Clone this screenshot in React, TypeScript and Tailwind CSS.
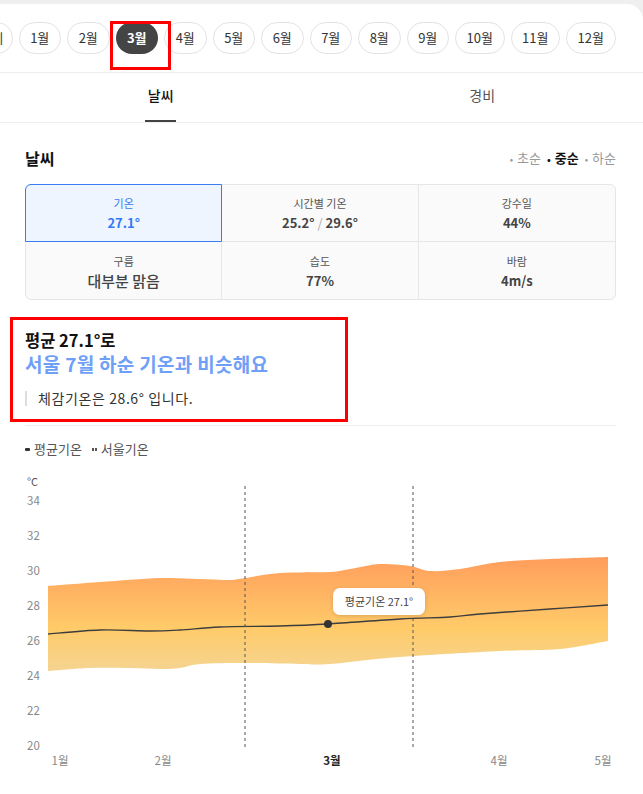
import type { ReactNode } from 'react'

type Pt = [number, number]

// catmull-rom through the points, returned as cubic segments (no leading M)
function curve(pts: Pt[]) {
  let d = ''
  for (let i = 0; i < pts.length - 1; i++) {
    const p0 = pts[i - 1] ?? pts[i]
    const p1 = pts[i]
    const p2 = pts[i + 1]
    const p3 = pts[i + 2] ?? p2
    const c1: Pt = [p1[0] + (p2[0] - p0[0]) / 6, p1[1] + (p2[1] - p0[1]) / 6]
    const c2: Pt = [p2[0] - (p3[0] - p1[0]) / 6, p2[1] - (p3[1] - p1[1]) / 6]
    d += ` C${c1[0]},${c1[1]} ${c2[0]},${c2[1]} ${p2[0]},${p2[1]}`
  }
  return d
}

const months = ['1월', '2월', '3월', '4월', '5월', '6월', '7월', '8월', '9월', '10월', '11월', '12월']

const bandTop: Pt[] = [
  [48, 584], [100, 580], [160, 576], [200, 577], [230, 578], [245, 576], [280, 571],
  [330, 570], [350, 567], [380, 562], [410, 564], [430, 569], [460, 567], [500, 560],
  [550, 557], [608, 555],
]
const bandBottom: Pt[] = [
  [608, 639], [560, 647], [500, 649], [400, 655], [330, 662], [300, 662], [245, 661],
  [200, 662], [180, 666], [160, 667], [130, 666], [90, 666], [48, 669],
]
const mean: Pt[] = [
  [48, 632], [100, 628], [150, 629], [180, 628], [220, 625], [280, 624], [328, 622],
  [400, 617], [450, 615], [480, 612], [550, 607], [608, 603],
]

function Cell({ label, value, big, active, last, bottom }: {
  label: string
  value: ReactNode
  big?: boolean
  active?: boolean
  last?: boolean
  bottom?: boolean
}) {
  return (
    <div
      className={`relative flex h-[57px] flex-col items-center justify-center ${last ? '' : 'border-r border-[#e6e6e6]'} ${bottom ? '' : 'border-b border-[#e6e6e6]'} ${active ? 'bg-[#eef5ff]' : ''}`}
    >
      {active && <div className="absolute -inset-px rounded-tl-[6px] border border-[#3b7cf0]" />}
      <div className={`text-[11px] leading-[19px] ${active ? 'text-[#3478f6]' : 'text-[#555]'}`}>{label}</div>
      <div
        className={`leading-[19px] ${big ? 'text-[15px] font-medium text-[#333]' : 'text-[13px] font-bold'} ${active ? 'text-[#3478f6]' : 'text-[#444]'}`}
      >
        {value}
      </div>
    </div>
  )
}

function Chart() {
  const yTicks = [34, 32, 30, 28, 26, 24, 22, 20]
  const xTicks: [string, number, boolean][] = [
    ['1월', 60, false], ['2월', 163, false], ['3월', 332, true], ['4월', 499, false], ['5월', 603, false],
  ]
  return (
    <svg width="591" height="300" viewBox="25 470 591 300" className="mt-[14px] block">
      <defs>
        <linearGradient id="band" x1="0" y1="555" x2="0" y2="669" gradientUnits="userSpaceOnUse">
          <stop offset="0" stopColor="#ff9d5c" />
          <stop offset="0.62" stopColor="#ffcb69" />
          <stop offset="1" stopColor="#f5d491" />
        </linearGradient>
        <filter id="shadow" x="-20%" y="-40%" width="140%" height="180%">
          <feDropShadow dx="0" dy="1" stdDeviation="2" floodColor="#000" floodOpacity="0.15" />
        </filter>
      </defs>

      <text x="27" y="484" fontSize="11" fill="#555">°C</text>
      {yTicks.map((t, i) => (
        <text key={t} x="27" y={503 + i * 35} fontSize="11.5" fill="#888">{t}</text>
      ))}

      <path
        d={`M${bandTop[0][0]},${bandTop[0][1]}${curve(bandTop)} L${bandBottom[0][0]},${bandBottom[0][1]}${curve(bandBottom)} Z`}
        fill="url(#band)"
      />
      <path d={`M${mean[0][0]},${mean[0][1]}${curve(mean)}`} fill="none" stroke="#3d3d3d" strokeWidth="1.4" />

      <line x1="245" y1="484" x2="245" y2="746" stroke="#555" strokeDasharray="3 3" />
      <line x1="413" y1="484" x2="413" y2="746" stroke="#555" strokeDasharray="3 3" />

      <circle cx="328" cy="622" r="4" fill="#333" />

      <rect x="333" y="586" width="92" height="27" rx="7" fill="#fff" filter="url(#shadow)" />
      <text x="379" y="603.5" fontSize="11" fill="#444" textAnchor="middle">평균기온 27.1°</text>

      {xTicks.map(([l, x, b]) => (
        <text
          key={l}
          x={x}
          y="763"
          fontSize="11.5"
          textAnchor="middle"
          fill={b ? '#222' : '#888'}
          fontWeight={b ? 700 : 400}
        >
          {l}
        </text>
      ))}
    </svg>
  )
}

export default function App() {
  return (
    <div className="relative min-h-screen overflow-hidden bg-[#efefef] pt-[4px] font-['Noto_Sans_CJK_KR','Noto_Sans',sans-serif] text-[#111]">
      <div className="min-h-[790px] rounded-tr-[16px] bg-white">
        {/* month picker */}
        <div className="overflow-hidden border-b border-[#eee]">
          <div className="-ml-[30px] flex gap-[6px] py-[18px]">
            <div className="flex h-[32px] w-[42.5px] shrink-0 items-center justify-center rounded-full border border-[#e3e3e3] text-[13px] text-[#333]">
              전체
            </div>
            {months.map(m => {
              const active = m === '3월'
              return (
                <div
                  key={m}
                  className={`flex h-[32px] shrink-0 items-center justify-center rounded-full text-[13px] ${m.length > 2 ? 'w-[49.5px]' : 'w-[42.5px]'} ${active ? 'bg-[#444] font-bold text-white' : 'border border-[#e3e3e3] text-[#333]'}`}
                >
                  {m}
                </div>
              )
            })}
          </div>
        </div>

        {/* tabs */}
        <div className="flex h-[50px] border-b border-[#eee]">
          <div className="flex flex-1 flex-col items-center">
            <span className="pt-[12px] text-[14px] leading-[20px] font-medium text-[#111]">날씨</span>
            <div className="mt-auto h-[2px] w-[31px] bg-[#444]" />
          </div>
          <div className="flex flex-1 flex-col items-center">
            <span className="pt-[12px] text-[14px] leading-[20px] text-[#555]">경비</span>
          </div>
        </div>

        <div className="pr-[27px] pl-[25px]">
          <div className="mt-[23px] flex h-[24px] items-center justify-between">
            <h2 className="text-[16px] font-bold">날씨</h2>
            <div className="flex items-center gap-[6px] text-[13px]">
              <span className="text-[#999]"><span className="mr-[4px] text-[10px]">•</span>초순</span>
              <span className="font-bold text-[#111]"><span className="mr-[4px] text-[10px]">•</span>중순</span>
              <span className="text-[#999]"><span className="mr-[4px] text-[10px]">•</span>하순</span>
            </div>
          </div>

          <div className="mt-[14px] grid grid-cols-3 rounded-[6px] border border-[#e6e6e6] bg-[#fafafa]">
            <Cell label="기온" value="27.1°" active />
            <Cell label="시간별 기온" value={<>25.2° <span className="font-normal text-[#aaa]">/</span> 29.6°</>} />
            <Cell label="강수일" value="44%" last />
            <Cell label="구름" value="대부분 맑음" big bottom />
            <Cell label="습도" value="77%" bottom />
            <Cell label="바람" value="4m/s" last bottom />
          </div>

          <div className="mt-[29px] text-[16.5px] leading-[22px] font-bold">평균 27.1°로</div>
          <div className="text-[19px] leading-[26px] font-bold tracking-[0.3px] text-[#6fa0f8]">서울 7월 하순 기온과 비슷해요</div>
          <div className="mt-[12px] flex items-center">
            <div className="h-[15px] w-[2px] bg-[#ddd]" />
            <span className="ml-[11px] text-[14px] leading-[18px] tracking-[0.6px] text-[#333]">체감기온은 28.6° 입니다.</span>
          </div>

          <div className="mt-[18px] h-px bg-[#eee]" />

          <div className="mt-[14px] flex items-center text-[13px] leading-[18px] text-[#555]">
            <span className="mr-[4px] h-[3px] w-[5px] rounded-[1px] bg-[#333]" />
            평균기온
            <span className="mr-[4px] ml-[10px] flex gap-[1px]">
              <span className="h-[3px] w-[2px] bg-[#555]" />
              <span className="h-[3px] w-[2px] bg-[#555]" />
            </span>
            서울기온
          </div>

          <Chart />
        </div>
      </div>

      {/* annotation boxes */}
      <div className="absolute top-[21px] left-[110px] h-[49px] w-[61px] border-[3px] border-[#f00]" />
      <div className="absolute top-[317px] left-[10px] h-[105px] w-[338px] border-[3px] border-[#f00]" />
    </div>
  )
}
